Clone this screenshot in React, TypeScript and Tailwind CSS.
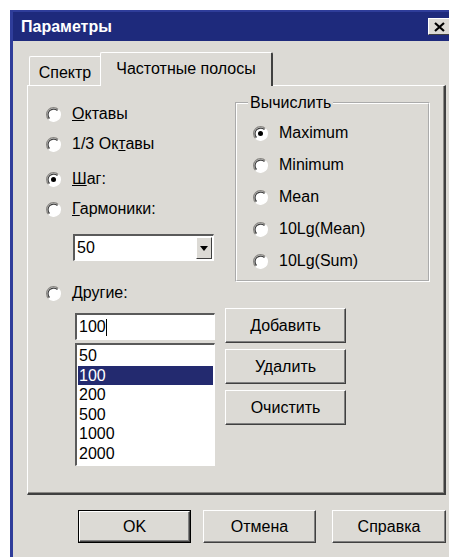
import React from 'react';

const FACE = 'bg-[#dcdad5]';

// classic 3D radio circle
const RadioDot: React.FC<{ checked?: boolean }> = ({ checked }) => (
  <svg width="15" height="15" viewBox="0 0 12 12" className="shrink-0">
    <circle cx="6" cy="6" r="5.5" fill="#ffffff" />
    <path d="M2.11 9.89 A5.5 5.5 0 0 1 9.89 2.11" fill="none" stroke="#8a8884" strokeWidth="1" />
    <path d="M2.82 9.18 A4.5 4.5 0 0 1 9.18 2.82" fill="none" stroke="#404040" strokeWidth="1" />
    <path d="M9.89 2.11 A5.5 5.5 0 0 1 2.11 9.89" fill="none" stroke="#ffffff" strokeWidth="1" />
    {checked && <circle cx="6" cy="6" r="2" fill="#000000" />}
  </svg>
);

const Radio: React.FC<{ checked?: boolean; className?: string; children: React.ReactNode }> = ({
  checked,
  className = '',
  children,
}) => (
  <div className={`flex items-center gap-[11px] ${className}`}>
    <RadioDot checked={checked} />
    <span className="text-[16px] leading-[20px] text-black whitespace-nowrap">{children}</span>
  </div>
);

const Btn: React.FC<{ w: string; h: string; isDefault?: boolean; children: React.ReactNode }> = ({
  w,
  h,
  isDefault,
  children,
}) => {
  const inner = (
    <div
      className={`flex items-center justify-center h-full w-full border-t border-l border-white border-r border-b border-r-[#404040] border-b-[#404040] shadow-[inset_-1px_-1px_0_#808080] ${FACE} text-[16px] text-black`}
    >
      {children}
    </div>
  );
  if (isDefault) {
    return <div className={`${w} ${h} border border-black shrink-0`}>{inner}</div>;
  }
  return <div className={`${w} ${h} shrink-0`}>{inner}</div>;
};

const sunken =
  'border-t-2 border-l-2 border-t-[#5a5a5a] border-l-[#5a5a5a] border-b border-r border-b-white border-r-white bg-white';

const listValues = ['50', '100', '200', '500', '1000', '2000'];

export default function App() {
  return (
    <div className="w-[449px] h-[557px] overflow-hidden bg-white pt-[10px] pl-[10px] font-['Liberation_Sans',Arial,sans-serif]">
      <div className="w-[444px] h-[560px] flex flex-col border-l-[3px] border-t-2 border-[#2f3d9a] bg-[#dcdad5]">
        {/* title bar */}
        <div className="h-[29px] shrink-0 flex items-center justify-between bg-[#1e2a7c] pl-[8px] pr-[3px]">
          <span className="text-white font-bold text-[16px]">Параметры</span>
          <div className="w-[23px] h-[17px] flex items-center justify-center border-t border-l border-white border-r border-b border-r-[#404040] border-b-[#404040] bg-[#dcdad5]">
            <svg width="11" height="10" viewBox="0 0 11 10">
              <path d="M1 1 L10 9 M10 1 L1 9" stroke="#000" strokeWidth="2.2" />
            </svg>
          </div>
        </div>

        <div className="flex flex-col pl-[14px] pr-[8px] pt-[10px]">
          {/* tabs */}
          <div className="flex items-end h-[34px] pl-[2px]">
            <div className="w-[71px] h-[29px] flex items-center justify-center pt-[4px] border-t border-l border-white rounded-tl-[2px] text-[16px] text-black">
              Спектр
            </div>
            <div className="relative z-10 w-[173px] h-[34px] -mb-px flex items-center justify-center pb-[2px] border-t border-l border-white border-r-2 border-r-[#404040] rounded-t-[2px] bg-[#dcdad5] text-[16px] text-black">
              Частотные полосы
            </div>
          </div>

          {/* tab page */}
          <div className="h-[410px] flex flex-col border-t border-l border-white border-r-2 border-b-2 border-r-[#404040] border-b-[#404040] shadow-[inset_-1px_-1px_0_#8c8a86] pl-[18px] pt-[8px]">
            <div className="flex items-start">
              <div className="w-[189px] flex flex-col">
                <Radio className="mt-[10px]">
                  <span className="underline">О</span>ктавы
                </Radio>
                <Radio className="mt-[10px]">
                  1/3 Ок<span className="underline">т</span>авы
                </Radio>
                <Radio checked className="mt-[15px]">
                  <span className="underline">Ш</span>аг:
                </Radio>
                <Radio className="mt-[10px]">
                  <span className="underline">Г</span>армоники:
                </Radio>
                <div className={`ml-[27px] mt-[15px] w-[141px] h-[27px] flex items-stretch ${sunken}`}>
                  <span className="flex-1 pl-[2px] text-[16px] leading-[24px] text-black">50</span>
                  <div className="w-[16px] my-px mr-px flex items-center justify-center border-t border-l border-white border-r border-b border-r-[#404040] border-b-[#404040] bg-[#dcdad5]">
                    <svg width="8" height="5" viewBox="0 0 8 5">
                      <path d="M0 0 H8 L4 5 Z" fill="#000" />
                    </svg>
                  </div>
                </div>
              </div>

              <fieldset className="w-[195px] border-2 border-white [border-style:groove] pl-[11px] pb-[3px] pt-[5px]">
                <legend className="px-[2px] text-[16px] leading-[18px] text-black">Вычислить</legend>
                <div className="flex flex-col pl-[5px]">
                  <Radio checked className="h-[32px]">Maximum</Radio>
                  <Radio className="h-[32px]">Minimum</Radio>
                  <Radio className="h-[32px]">Mean</Radio>
                  <Radio className="h-[32px]">10Lg(Mean)</Radio>
                  <Radio className="h-[32px]">10Lg(Sum)</Radio>
                </div>
              </fieldset>
            </div>

            <Radio className="mt-px">
              <span className="underline">Д</span>ругие:
            </Radio>

            <div className="flex items-start mt-[5px]">
              <div className="ml-[29px] mt-[5px] w-[140px] flex flex-col">
                <div className={`h-[27px] flex items-center pl-[2px] ${sunken}`}>
                  <span className="text-[16px] text-black">100</span>
                  <span className="w-px h-[17px] bg-black" />
                </div>
                <div className={`mt-[3px] h-[123px] flex flex-col p-px ${sunken}`}>
                  {listValues.map((v) => (
                    <div
                      key={v}
                      className={`h-[19.6px] leading-[19.6px] text-[16px] pl-px ${
                        v === '100' ? 'bg-[#232a6f] text-white' : 'text-black'
                      }`}
                    >
                      {v}
                    </div>
                  ))}
                </div>
              </div>
              <div className="ml-[10px] flex flex-col gap-[6px]">
                <Btn w="w-[121px]" h="h-[35px]">Добавить</Btn>
                <Btn w="w-[121px]" h="h-[35px]">Удалить</Btn>
                <Btn w="w-[121px]" h="h-[35px]">Очистить</Btn>
              </div>
            </div>
          </div>

          {/* dialog buttons */}
          <div className="flex justify-end mt-[15px]">
            <Btn w="w-[113px]" h="h-[33px]" isDefault>
              OK
            </Btn>
            <div className="ml-[12px]">
              <Btn w="w-[113px]" h="h-[33px]">Отмена</Btn>
            </div>
            <div className="ml-[16px]">
              <Btn w="w-[114px]" h="h-[33px]">Справка</Btn>
            </div>
          </div>
        </div>
      </div>
    </div>
  );
}
